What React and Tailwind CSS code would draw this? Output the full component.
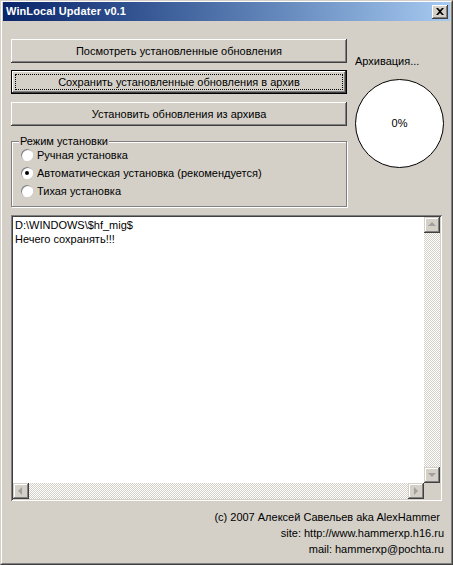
import React from 'react'

const FONT = { fontFamily: '"Liberation Sans", Arial, sans-serif' }

const BTN =
  'h-[24px] w-full flex items-center justify-center text-[11px] text-black bg-[#d4d0c8] shadow-[inset_-1px_-1px_#404040,inset_1px_1px_#ffffff,inset_-2px_-2px_#808080,inset_2px_2px_#d4d0c8]'

const TRACK =
  'bg-[repeating-conic-gradient(#d4d0c8_0_25%,#ffffff_0_50%)] bg-[length:2px_2px]'

const ScrollBtn = ({ dir }) => {
  const pts = {
    up: '4,6 8,2 12,6',
    down: '4,3 8,7 12,3',
    left: '6,4 2,8 6,12',
    right: '3,4 7,8 3,12',
  }[dir]
  const vertical = dir === 'up' || dir === 'down'
  return (
    <div className="w-[16px] h-[16px] bg-[#d4d0c8] shadow-[inset_-1px_-1px_#404040,inset_1px_1px_#d4d0c8,inset_-2px_-2px_#808080,inset_2px_2px_#ffffff] flex items-center justify-center">
      <svg width={vertical ? 16 : 10} height={vertical ? 10 : 16} viewBox={vertical ? '0 0 16 10' : '0 0 10 16'}>
        <polygon points={pts} fill="#a0a0a0" />
      </svg>
    </div>
  )
}

const Radio = ({ checked, label }) => (
  <div className="flex items-center h-[18px]">
    <span className="ml-[1px] w-[12px] h-[12px] rounded-full bg-white flex items-center justify-center shadow-[inset_1px_1px_#808080,inset_-1px_-1px_#ffffff]">
      {checked && <span className="w-[4px] h-[4px] rounded-full bg-black" />}
    </span>
    <span className="ml-[4px] text-[11px] text-black">{label}</span>
  </div>
)

export default function App() {
  return (
    <div
      style={FONT}
      className="w-[453px] h-[565px] bg-[#d4d0c8] flex flex-col border-t border-l border-t-[#d4d0c8] border-l-[#d4d0c8] border-r border-b border-r-[#404040] border-b-[#404040] overflow-hidden"
    >
      <div className="flex-1 flex flex-col border-t border-l border-t-white border-l-white border-r border-b border-r-[#808080] border-b-[#808080] px-[1px] pb-[1px]">
        {/* title bar */}
        <div className="h-[19px] flex items-center justify-between pl-[3px] pr-[2px] bg-gradient-to-r from-[#0a246a] to-[#a6caf0]">
          <span className="text-white font-bold text-[11px] tracking-[0.1px]">WinLocal Updater v0.1</span>
          <div className="w-[16px] h-[14px] bg-[#d4d0c8] shadow-[inset_-1px_-1px_#404040,inset_1px_1px_#ffffff,inset_-2px_-2px_#808080] flex items-center justify-center">
            <svg width="8" height="7" viewBox="0 0 8 7">
              <path d="M0 0 L2 0 L4 2 L6 0 L8 0 L5 3.5 L8 7 L6 7 L4 5 L2 7 L0 7 L3 3.5 Z" fill="#000" />
            </svg>
          </div>
        </div>

        <div className="flex pl-[8px] pr-[6px] pt-[18px]">
          <div className="w-[336px] flex flex-col">
            <div className={BTN}>Посмотреть установленные обновления</div>
            <div className="mt-[7px] h-[24px] border border-black">
              <div className="relative h-full w-full flex items-center justify-center text-[11px] text-black bg-[#d4d0c8] shadow-[inset_-1px_-1px_#404040,inset_1px_1px_#ffffff,inset_-2px_-2px_#808080]">
                <div className="absolute inset-[3px] border border-dotted border-black" />
                Сохранить установленные обновления в архив
              </div>
            </div>
            <div className={BTN + ' mt-[8px]'}>Установить обновления из архива</div>

            {/* group box */}
            <div className="relative mt-[15px] h-[66px] border border-[#808080] shadow-[inset_1px_1px_#ffffff,1px_1px_#ffffff] pl-[8px] pt-[4px]">
              <span className="absolute left-[7px] top-[-8px] bg-[#d4d0c8] px-[1px] text-[11px] text-black leading-[14px]">
                Режим установки
              </span>
              <Radio label="Ручная установка" />
              <Radio checked label="Автоматическая установка (рекомендуется)" />
              <Radio label="Тихая установка" />
            </div>
          </div>

          <div className="flex-1 pl-[8px] pt-[15px]">
            <div className="text-[11px] text-black leading-[14px]">Архивация...</div>
            <div className="mt-[11px] w-[89px] h-[89px] rounded-full bg-white border border-black flex items-center justify-center text-[11px] text-black">
              0%
            </div>
          </div>
        </div>

        {/* log box */}
        <div className="mx-[8px] mt-[8px] h-[286px] flex flex-col shadow-[inset_1px_1px_#808080,inset_-1px_-1px_#ffffff,inset_2px_2px_#404040,inset_-2px_-2px_#d4d0c8] p-[2px]">
          <div className="flex-1 flex min-h-0">
            <div className="flex-1 bg-white px-[2px] pt-[1px] text-[11px] leading-[14px] text-black">
              <div>D:\WINDOWS\$hf_mig$</div>
              <div>Нечего сохранять!!!</div>
            </div>
            <div className={'w-[16px] flex flex-col justify-between ' + TRACK}>
              <ScrollBtn dir="up" />
              <ScrollBtn dir="down" />
            </div>
          </div>
          <div className="h-[16px] flex">
            <div className={'flex-1 flex justify-between ' + TRACK}>
              <ScrollBtn dir="left" />
              <ScrollBtn dir="right" />
            </div>
            <div className="w-[16px] bg-[#d4d0c8]" />
          </div>
        </div>

        {/* footer */}
        <div className="pr-[6px] pt-[8px] flex flex-col items-end text-[11px] leading-[16px] text-black">
          <div className="pr-[4px]">(c) 2007 Алексей Савельев aka AlexHammer</div>
          <div>site: http://www.hammerxp.h16.ru</div>
          <div>mail: hammerxp@pochta.ru</div>
        </div>
      </div>
    </div>
  )
}
